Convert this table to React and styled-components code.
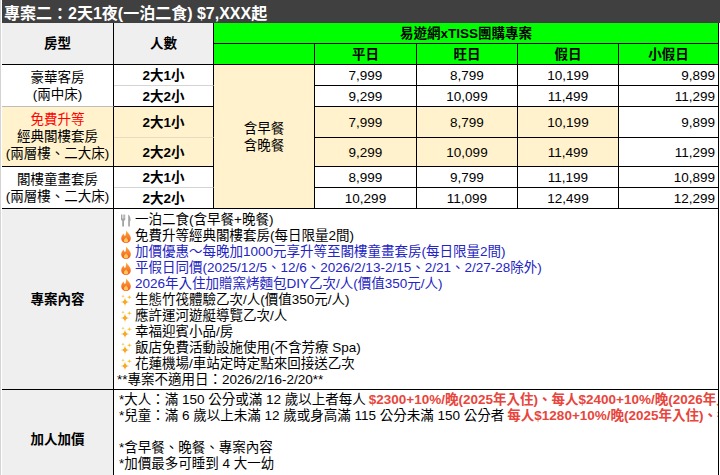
import React from 'react';
import styled, { createGlobalStyle } from 'styled-components';

const Global = createGlobalStyle`
  html, body { margin: 0; padding: 0; background: #fff; overflow: hidden; }
  body { font-family: "Liberation Sans", "Noto Sans CJK TC", sans-serif; }
`;

const Page = styled.div`
  width: 720px;
  height: 475px;
  overflow: hidden;
  box-sizing: border-box;
  border-left: 1px solid #d4d4d4;
  padding-left: 1px;
`;

const Sheet = styled.div`
  display: grid;
  grid-template-columns: 112px 100px 101px 102px 101px 101px 100px;
  grid-template-rows: 23px 21px 21px 21px 21px 31px 29px 21px 21px 181px 100px;
`;

const TitleBar = styled.div`
  grid-column: 1 / -1;
  grid-row: 1;
  margin-right: -2px;
  background: #404040;
  color: #fff;
  font-size: 16px;
  font-weight: 700;
  display: flex;
  align-items: center;
  padding-left: 2px;
  white-space: nowrap;
`;

const Cell = styled.div`
  grid-column: ${(p) => p.$col};
  grid-row: ${(p) => p.$row};
  background: ${(p) => p.$bg || '#fff'};
  border-right: 1px solid ${(p) => p.$br || '#000'};
  border-bottom: 1px solid ${(p) => p.$bb || '#000'};
  box-sizing: border-box;
  display: flex;
  flex-direction: column;
  justify-content: center;
  align-items: ${(p) => (p.$align === 'right' ? 'flex-end' : 'center')};
  padding: 0 3px;
  font-size: 13.5px;
  font-weight: ${(p) => (p.$bold ? 700 : 400)};
  line-height: 17px;
  color: #000;
  white-space: nowrap;
  overflow: hidden;
`;

const Red = styled.span`
  color: #ff0000;
`;

const TextCell = styled.div`
  grid-column: 2 / 8;
  grid-row: ${(p) => p.$row};
  border-right: 1px solid #000;
  border-bottom: 1px solid #000;
  box-sizing: border-box;
  padding: ${(p) => p.$pad};
  font-size: 13.5px;
  line-height: 16px;
  white-space: nowrap;
  overflow: hidden;
  color: #000;
`;

const Line = styled.div`
  display: flex;
  align-items: center;
  gap: 3px;
  height: 16px;
  color: ${(p) => (p.$blue ? '#2424c4' : '#000')};
  margin-left: ${(p) => (p.$flush ? '-3px' : '0')};
`;

const Hot = styled.span`
  color: #e8453c;
  font-weight: 700;
`;

const IconBox = styled.svg`
  width: 12px;
  height: 13px;
  flex: none;
`;

const Cutlery = () => (
  <IconBox viewBox="0 0 12 13">
    <g fill="#a3a3a3">
      <rect x="1" y="0.5" width="1" height="4.5" />
      <rect x="2.6" y="0.5" width="1" height="4.5" />
      <rect x="4.2" y="0.5" width="1" height="4.5" />
      <path d="M1 4.5 H5.2 V5.6 Q5.2 6.6 4 6.8 V12.5 H2.2 V6.8 Q1 6.6 1 5.6 Z" />
      <path d="M8.2 0.5 Q10.6 2 10.6 6.5 L9.9 7.2 V12.5 H8.2 Z" />
    </g>
  </IconBox>
);

const Flame = () => (
  <IconBox viewBox="0 0 12 13">
    <defs>
      <linearGradient id="fl" x1="0" y1="0" x2="0" y2="1">
        <stop offset="0" stopColor="#ffb03a" />
        <stop offset="1" stopColor="#f0541e" />
      </linearGradient>
    </defs>
    <path
      d="M6.2 0.3 C7 2.6 10.8 4.6 10.8 8.4 A4.8 4.6 0 0 1 1.2 8.4 C1.2 6.2 2.6 5 3.6 3.6 C3.8 5 4.4 5.8 5.2 6 C5.8 4.4 6.3 2.6 6.2 0.3 Z"
      fill="url(#fl)"
    />
    <path d="M6 7.2 C6.6 8.6 8.2 9.2 8.2 10.6 A2.2 2 0 0 1 3.8 10.6 C3.8 9.4 5.3 8.8 6 7.2 Z" fill="#ffc65a" />
  </IconBox>
);

const star = (cx, cy, r) =>
  `M${cx} ${cy - r} Q${cx} ${cy} ${cx + r} ${cy} Q${cx} ${cy} ${cx} ${cy + r} Q${cx} ${cy} ${cx - r} ${cy} Q${cx} ${cy} ${cx} ${cy - r} Z`;

const Sparkle = () => (
  <IconBox viewBox="0 0 12 13">
    <path d={star(5, 8, 4.8)} fill="#f7a825" />
    <path d={star(9.4, 3.2, 2.6)} fill="#fbc33c" />
    <path d={star(3, 2.2, 1.6)} fill="#fbc33c" />
  </IconBox>
);

const G = '#00ff00';
const Y = '#fff2cc';
const GR = '#efefef';
const LIGHT = '#d4d4d4';

export default function App() {
  return (
    <>
      <Global />
      <Page>
        <Sheet>
          <TitleBar>專案二：2天1夜(一泊二食) $7,XXX起</TitleBar>

          <Cell $col="1" $row="2 / 4" $bg={GR} $bold>房型</Cell>
          <Cell $col="2" $row="2 / 4" $bg={GR} $bold>人數</Cell>
          <Cell $col="3 / 8" $row="2" $bg={G} $bold>易遊網xTISS團購專案</Cell>
          <Cell $col="3" $row="3" $bg={G} />
          <Cell $col="4" $row="3" $bg={G} $bold>平日</Cell>
          <Cell $col="5" $row="3" $bg={G} $bold>旺日</Cell>
          <Cell $col="6" $row="3" $bg={G} $bold>假日</Cell>
          <Cell $col="7" $row="3" $bg={G} $bold>小假日</Cell>

          <Cell $col="1" $row="4 / 6" $bb="#bdbdbd">
            <div>豪華客房</div>
            <div>(兩中床)</div>
          </Cell>
          <Cell $col="2" $row="4" $bold $bb={LIGHT}>2大1小</Cell>
          <Cell $col="2" $row="5" $bold>2大2小</Cell>
          <Cell $col="3" $row="4 / 10" $bg={Y}>
            <div>含早餐</div>
            <div>含晚餐</div>
          </Cell>
          <Cell $col="4" $row="4">7,999</Cell>
          <Cell $col="5" $row="4">8,799</Cell>
          <Cell $col="6" $row="4">10,199</Cell>
          <Cell $col="7" $row="4" $align="right">9,899</Cell>
          <Cell $col="4" $row="5">9,299</Cell>
          <Cell $col="5" $row="5">10,099</Cell>
          <Cell $col="6" $row="5">11,499</Cell>
          <Cell $col="7" $row="5" $align="right">11,299</Cell>

          <Cell $col="1" $row="6 / 8" $bg={Y}>
            <Red>免費升等</Red>
            <div>經典閣樓套房</div>
            <div>(兩層樓、二大床)</div>
          </Cell>
          <Cell $col="2" $row="6" $bg={Y} $bold $bb="#e6dcc0">2大1小</Cell>
          <Cell $col="2" $row="7" $bg={Y} $bold>2大2小</Cell>
          <Cell $col="4" $row="6" $bg={Y}>7,999</Cell>
          <Cell $col="5" $row="6" $bg={Y}>8,799</Cell>
          <Cell $col="6" $row="6" $bg={Y}>10,199</Cell>
          <Cell $col="7" $row="6" $align="right">9,899</Cell>
          <Cell $col="4" $row="7" $bg={Y}>9,299</Cell>
          <Cell $col="5" $row="7" $bg={Y}>10,099</Cell>
          <Cell $col="6" $row="7" $bg={Y}>11,499</Cell>
          <Cell $col="7" $row="7" $align="right">11,299</Cell>

          <Cell $col="1" $row="8 / 10">
            <div>閣樓童畫套房</div>
            <div>(兩層樓、二大床)</div>
          </Cell>
          <Cell $col="2" $row="8" $bold $bb={LIGHT}>2大1小</Cell>
          <Cell $col="2" $row="9" $bold>2大2小</Cell>
          <Cell $col="4" $row="8">8,999</Cell>
          <Cell $col="5" $row="8">9,799</Cell>
          <Cell $col="6" $row="8">11,199</Cell>
          <Cell $col="7" $row="8" $align="right">10,899</Cell>
          <Cell $col="4" $row="9">10,299</Cell>
          <Cell $col="5" $row="9">11,099</Cell>
          <Cell $col="6" $row="9">12,499</Cell>
          <Cell $col="7" $row="9" $align="right">12,299</Cell>

          <Cell $col="1" $row="10" $bg={GR} $bold>專案內容</Cell>
          <TextCell $row="10" $pad="3px 3px 0 6px">
            <Line><Cutlery />一泊二食(含早餐+晚餐)</Line>
            <Line><Flame />免費升等經典閣樓套房(每日限量2間)</Line>
            <Line $blue><Flame />加價優惠～每晚加1000元享升等至閣樓童畫套房(每日限量2間)</Line>
            <Line $blue><Flame />平假日同價(2025/12/5、12/6、2026/2/13-2/15、2/21、2/27-28除外)</Line>
            <Line $blue><Flame />2026年入住加贈窯烤麵包DIY乙次/人(價值350元/人)</Line>
            <Line><Sparkle />生態竹筏體驗乙次/人(價值350元/人)</Line>
            <Line><Sparkle />應許運河遊艇導覽乙次/人</Line>
            <Line><Sparkle />幸福迎賓小品/房</Line>
            <Line><Sparkle />飯店免費活動設施使用(不含芳療 Spa)</Line>
            <Line><Sparkle />花蓮機場/車站定時定點來回接送乙次</Line>
            <Line $flush>**專案不適用日：2026/2/16-2/20**</Line>
          </TextCell>

          <Cell $col="1" $row="11" $bg={GR} $bold>加人加價</Cell>
          <TextCell $row="11" $pad="2px 0 0 5px">
            <Line>*大人：滿 150 公分或滿 12 歲以上者每人<Hot>$2300+10%/晚(2025年入住)、每人$2400+10%/晚(2026年入住)</Hot></Line>
            <Line>*兒童：滿 6 歲以上未滿 12 歲或身高滿 115 公分未滿 150 公分者 <Hot>每人$1280+10%/晚(2025年入住)、每人$1380+10%/晚(2026年入住)</Hot></Line>
            <Line />
            <Line>*含早餐、晚餐、專案內容</Line>
            <Line>*加價最多可睡到 4 大一幼</Line>
          </TextCell>
        </Sheet>
      </Page>
    </>
  );
}
